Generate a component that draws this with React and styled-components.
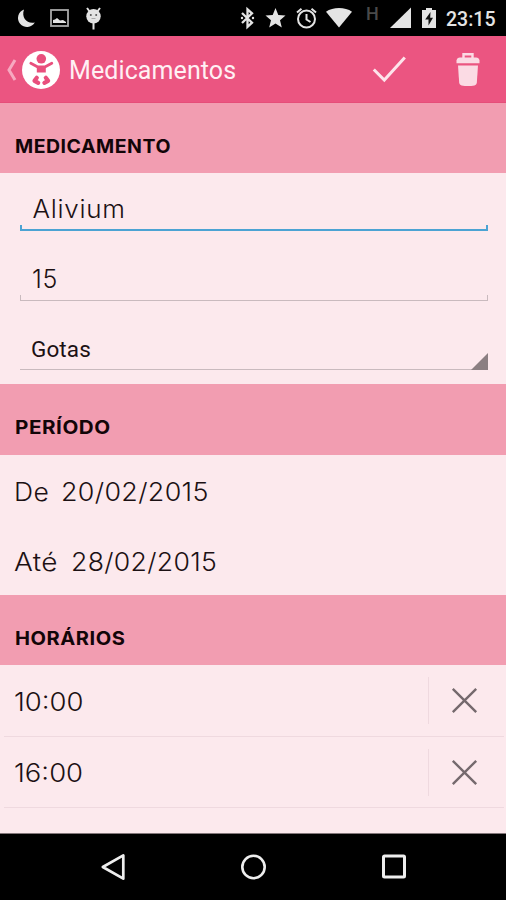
import React, {useState} from 'react';
import styled, {createGlobalStyle} from 'styled-components';

const GlobalStyle = createGlobalStyle`
  * {
    box-sizing: border-box;
  }
  body {
    margin: 0;
    background: #000;
  }
`;

const AppWrapper = styled.main`
  width: 506px;
  height: 900px;
  display: flex;
  flex-direction: column;
  overflow: hidden;
  background: #fce9ed;
  color: #1c1114;
  font-family: Inter, 'Open Sans', sans-serif;
`;

const StatusBar = styled.div`
  height: 36px;
  flex: none;
  display: flex;
  justify-content: space-between;
  padding: 7px 10px 0 17px;
  background: #000;
`;
const StatusGroup = styled.div`
  display: flex;
  align-items: flex-start;
`;
const Icon = styled.svg`
  display: block;
  flex: none;
  overflow: visible;
  margin-left: ${(p) => p.$left || 0}px;
`;
const Network = styled.span`
  width: 13px;
  margin-left: 14px;
  font: 500 18px/14px Roboto, sans-serif;
  color: #4a4a4a;
`;
const Clock = styled.span`
  width: 50px;
  margin-left: 10px;
  font: 500 19.5px/25px Roboto, sans-serif;
  color: #e4e4e4;
`;

const ActionBar = styled.header`
  height: 67px;
  flex: none;
  display: flex;
  align-items: center;
  padding: 1px 26px 0 7px;
  background: #eb5581;
  border-bottom: 1px solid #e64d79;
`;
const Title = styled.h1`
  flex: 1;
  margin: 3px 0 0 9px;
  font: 400 25px/30px Roboto, sans-serif;
  letter-spacing: 0.1px;
  color: #fff0f4;
`;
const IconButton = styled.button`
  display: flex;
  padding: 0;
  border: 0;
  background: none;
  margin-left: ${(p) => p.$left || 0}px;
`;

const Text = styled.span`
  display: inline-block;
  transform: scaleX(${(p) => p.$stretch || 1});
  transform-origin: left;
`;

const SectionTitle = styled.h2`
  height: ${(p) => p.$height || 70}px;
  flex: none;
  margin: 0;
  padding: 33px 15px 0;
  background: #f29db1;
  color: #120508;
  font-size: 19px;
  line-height: 22px;
  font-weight: 700;
  letter-spacing: 0.5px;
`;

const Form = styled.form`
  height: 211px;
  flex: none;
  display: flex;
  flex-direction: column;
  padding: 12px 18px 0 20px;
`;
const Field = styled.label`
  display: block;
  height: 70px;
  padding-top: 8px;
`;
const Input = styled.input`
  display: block;
  width: 100%;
  height: 32px;
  padding: 0 12px;
  border: 0;
  outline: 0;
  background: none;
  color: inherit;
  font: 300 25px/32px Inter, sans-serif;
  letter-spacing: 0.7px;
  transform: scaleX(${(p) => p.$stretch || 1});
  transform-origin: left;
`;
const Underline = styled.div`
  height: 6px;
  border: solid ${(p) => (p.$active ? '#4ba3d3' : '#c9babe')};
  border-width: ${(p) => (p.$active ? '0 2px 2px' : '0 1px 1px')};
`;
const Spinner = styled.div`
  height: 45px;
  display: flex;
  justify-content: space-between;
  align-items: flex-end;
  padding-left: 11px;
  border-bottom: 1px solid #c9babe;
  font: 400 22.5px/40px Roboto, sans-serif;
  letter-spacing: 0.1px;
`;
const Corner = styled.svg`
  display: block;
  margin-bottom: -1px;
`;

const Period = styled.div`
  height: 140px;
  flex: none;
  display: flex;
  flex-direction: column;
`;
const DateRow = styled.div`
  height: 70px;
  display: flex;
  align-items: center;
  gap: ${(p) => p.$gap}px;
  padding: 3px 15px 0 14px;
  font-size: 25px;
  font-weight: 300;
  letter-spacing: 0.3px;
`;

const TimeRow = styled.div`
  height: 71.5px;
  flex: none;
  display: flex;
  align-items: center;
  margin: 0 2px 0 4px;
  padding: 1px 27px 0 10px;
  border-bottom: 1px solid #efd9df;
  font-size: 25px;
  font-weight: 300;
  line-height: 32px;
`;
const Time = styled(Text)`
  padding-top: 2px;
`;
const Remove = styled.button`
  height: 47px;
  display: flex;
  align-items: center;
  margin: 0 0 0 auto;
  padding: 0 0 0 23px;
  border: 0;
  border-left: 1px solid #efd9df;
  background: none;
`;

const NavBar = styled.nav`
  height: 67px;
  flex: none;
  display: flex;
  align-items: center;
  gap: 116px;
  margin-top: auto;
  padding-left: 101px;
  border-top: 1px solid #83777a;
  background: #000;
`;

const StatusIcons = () => (
  <StatusBar>
    <StatusGroup>
      <Icon width="18" height="22" fill="#e4e4e4">
        <path d="M7 2.5A9 9 0 1 0 17.8 15.5C10.5 17.5 4 11 7 2.5Z" />
      </Icon>
      <Icon width="19" height="22" $left={15}>
        <rect x="1" y="3" width="17" height="16" fill="none" stroke="#a9a9a9" strokeWidth="1.8" />
        <path d="M3 16v-3l2-.5 2-1.5 3 2.5 3-.5 3 2V16Z" fill="#e4e4e4" />
      </Icon>
      <Icon width="15" height="24" $left={17}>
        <path d="m1 1 3 4M14 1l-3 4M7.5 16v6.5" stroke="#e4e4e4" strokeWidth="2" />
        <circle cx="7.5" cy="9.3" r="7.2" fill="#e4e4e4" />
        <circle cx="4.8" cy="8" r="1" fill="#555" />
        <circle cx="10.2" cy="8" r="1" fill="#555" />
        <path d="M5.5 11.5h4" stroke="#aaa" />
      </Icon>
    </StatusGroup>
    <StatusGroup>
      <Icon width="13" height="22" fill="none" stroke="#e4e4e4" strokeWidth="2.3">
        <path d="m1 6 10 9.7-4.5 4.1V2.3L11 6.3 1 16" />
        <circle cx="1" cy="11" r="1.2" fill="#e4e4e4" stroke="none" />
        <circle cx="12" cy="11" r="1.2" fill="#e4e4e4" stroke="none" />
      </Icon>
      <Icon width="21" height="22" $left={11} fill="#e4e4e4">
        <path d="m10.5 1 2.8 6.9 7.2.5-5.5 4.8 1.8 7.2-6.3-4-6.3 4L6 13.2.5 8.4l7.2-.5Z" />
      </Icon>
      <Icon width="21" height="22" $left={10} fill="none" stroke="#e4e4e4" strokeWidth="2">
        <circle cx="10.5" cy="12" r="8.5" />
        <path d="M10.5 7v5.5l4 2.5M1 5.5 5.5 1.7M20 5.5l-4.5-3.8" />
      </Icon>
      <Icon width="26" height="22" $left={9} fill="#e4e4e4">
        <path d="M0 4.8C7-.2 19-.2 26 4.8L13 20.5Z" />
      </Icon>
      <Network>H</Network>
      <Icon width="21" height="22" $left={11} fill="#e4e4e4">
        <path d="M21 .5V21H0Z" />
      </Icon>
      <Icon width="14" height="22" $left={11}>
        <path d="M4 1h6v2h4v18H0V3h4Z" fill="#e4e4e4" />
        <path d="M8.5 5 3.2 12.5h3.3V18.5L11 10.8H8.2Z" fill="#111" />
      </Icon>
      <Clock>23:15</Clock>
    </StatusGroup>
  </StatusBar>
);

const BabyLogo = () => (
  <Icon width="38" height="38" viewBox="0 0 38 38" $left={5}>
    <circle cx="19" cy="19" r="19" fill="#fff" />
    <g fill="none" stroke="#e94f7d" strokeLinecap="round" strokeLinejoin="round">
      <circle cx="19.3" cy="7.8" r="4.8" fill="#e94f7d" stroke="none" />
      <path d="m8.8 12.3 7 3.7h7l7-3.7" strokeWidth="2.8" />
      <path d="M14.8 15h9v6.5h-9Z" fill="#e94f7d" stroke="none" />
      <path d="m14.8 26.8-2.3 3 3.7 2M23.8 26.8l2.3 3-3.7 2" strokeWidth="4.2" />
    </g>
  </Icon>
);

const TrashIcon = () => (
  <Icon width="24" height="33" viewBox="0 0 24 33" fill="#fbdbe4">
    <path d="M7.5 5V1.3h9V5" fill="none" stroke="#fbdbe4" strokeWidth="2.4" />
    <path d="M4 4.5h16q3 0 3.5 3v2.8H.5V7.5q.5-3 3.5-3Z" />
    <path d="M2 12.5h20L20.8 30q-.3 2-2.3 2.4-6.5 1-13 0-2-.4-2.3-2.4Z" />
  </Icon>
);

const App = () => {
  const [name, setName] = useState('Alivium')
  const [dose, setDose] = useState('15')
  const [times, setTimes] = useState(['10:00', '16:00'])

  const handleRemove = (time) => {
    setTimes(times.filter((item) => item !== time))
  }

  return (
    <AppWrapper>
      <GlobalStyle />
      <StatusIcons />

      <ActionBar>
        <Icon width="10" height="22" fill="none" stroke="#f7a9c0" strokeWidth="3">
          <path d="M8 1 2 11l6 10" />
        </Icon>
        <BabyLogo />
        <Title>Medicamentos</Title>
        <IconButton aria-label="Salvar">
          <Icon width="34" height="25" fill="none" stroke="#fde4eb" strokeWidth="3">
            <path d="m.8 12.5 10.5 10.5L31.8.5" />
          </Icon>
        </IconButton>
        <IconButton aria-label="Excluir" $left={49}>
          <TrashIcon />
        </IconButton>
      </ActionBar>

      <SectionTitle>
        <Text $stretch={1.026}>MEDICAMENTO</Text>
      </SectionTitle>
      <Form>
        <Field>
          <Input $stretch={1.04} value={name} onChange={(e) => setName(e.target.value)} />
          <Underline $active />
        </Field>
        <Field>
          <Input value={dose} onChange={(e) => setDose(e.target.value)} />
          <Underline />
        </Field>
        <Spinner>
          Gotas
          <Corner width="17" height="17">
            <path d="M17 0v17H0Z" fill="#8b7f82" />
          </Corner>
        </Spinner>
      </Form>

      <SectionTitle $height={71}>
        <Text $stretch={1.085}>PERÍODO</Text>
      </SectionTitle>
      <Period>
        <DateRow $gap={14}>
          <Text $stretch={1.06}>De</Text>
          <Text $stretch={1.075}>20/02/2015</Text>
        </DateRow>
        <DateRow $gap={18}>
          <Text $stretch={1.12}>Até</Text>
          <Text $stretch={1.065}>28/02/2015</Text>
        </DateRow>
      </Period>

      <SectionTitle>
        <Text $stretch={1.058}>HORÁRIOS</Text>
      </SectionTitle>
      {times.map((time) => (
        <TimeRow key={time}>
          <Time $stretch={1.1}>{time}</Time>
          <Remove aria-label="Remover" onClick={() => handleRemove(time)}>
            <Icon width="25" height="25" stroke="#75696d" strokeWidth="2.4">
              <path d="m.8.8 23.4 23.4M24.2.8.8 24.2" />
            </Icon>
          </Remove>
        </TimeRow>
      ))}

      <NavBar>
        <Icon width="24" height="27" fill="none" stroke="#eee" strokeWidth="2.7" strokeLinejoin="round">
          <path d="M22.3 1.3v23.4L1.8 13Z" />
        </Icon>
        <Icon width="25" height="25" fill="none" stroke="#eee" strokeWidth="2.6">
          <circle cx="12.5" cy="12" r="11.2" />
        </Icon>
        <Icon width="24" height="24" fill="none" stroke="#eee" strokeWidth="3">
          <rect x="1.5" y="1" width="21" height="21" rx="1" />
        </Icon>
      </NavBar>
    </AppWrapper>
  );
}

export default App;
